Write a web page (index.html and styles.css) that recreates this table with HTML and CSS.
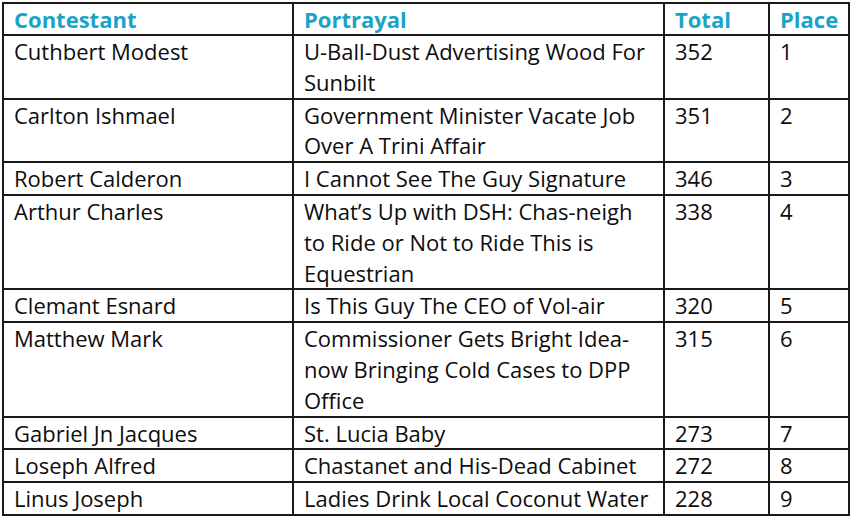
FILE: index.html
```html
<!DOCTYPE html>
<html>
<head>
<meta charset="utf-8">
<link rel="stylesheet" href="styles.css">
</head>
<body>
<table class="results">
  <colgroup>
    <col class="c-name">
    <col class="c-port">
    <col class="c-total">
    <col class="c-place">
  </colgroup>
  <thead>
    <tr><th>Contestant</th><th>Portrayal</th><th>Total</th><th>Place</th></tr>
  </thead>
  <tbody>
    <tr><td>Cuthbert Modest</td><td>U-Ball-Dust Advertising Wood For Sunbilt</td><td>352</td><td>1</td></tr>
    <tr><td>Carlton Ishmael</td><td>Government Minister Vacate Job Over A Trini Affair</td><td>351</td><td>2</td></tr>
    <tr><td>Robert Calderon</td><td>I Cannot See The Guy Signature</td><td>346</td><td>3</td></tr>
    <tr><td>Arthur Charles</td><td>What’s Up with DSH: Chas-neigh to Ride or Not to Ride This is Equestrian</td><td>338</td><td>4</td></tr>
    <tr><td>Clemant Esnard</td><td>Is This Guy The CEO of Vol-air</td><td>320</td><td>5</td></tr>
    <tr><td>Matthew Mark</td><td>Commissioner Gets Bright Idea- now Bringing Cold Cases to DPP Office</td><td>315</td><td>6</td></tr>
    <tr><td>Gabriel Jn Jacques</td><td>St. Lucia Baby</td><td>273</td><td>7</td></tr>
    <tr><td>Loseph Alfred</td><td>Chastanet and His-Dead Cabinet</td><td>272</td><td>8</td></tr>
    <tr><td>Linus Joseph</td><td>Ladies Drink Local Coconut Water</td><td>228</td><td>9</td></tr>
  </tbody>
</table>
</body>
</html>
```

FILE: styles.css
```css
html, body {
  margin: 0;
  padding: 0;
  background: #ffffff;
}
body {
  padding: 2px 0 0 2px;
  font-family: "Open Sans", "Noto Sans", sans-serif;
  font-size: 22px;
  color: #0d0d0d;
}
.results {
  border-collapse: collapse;
  table-layout: fixed;
  width: 846px;
}
.c-name { width: 290px; }
.c-port { width: 371px; }
.c-total { width: 105px; }
.c-place { width: 80px; }
.results th,
.results td {
  border: 2px solid #1a1a1a;
  padding: 0 6px 0 10px;
  line-height: 30.8px;
  text-align: left;
  vertical-align: top;
}
.results th {
  color: #1aa3c8;
  font-weight: 700;
  line-height: 30px;
}
```
